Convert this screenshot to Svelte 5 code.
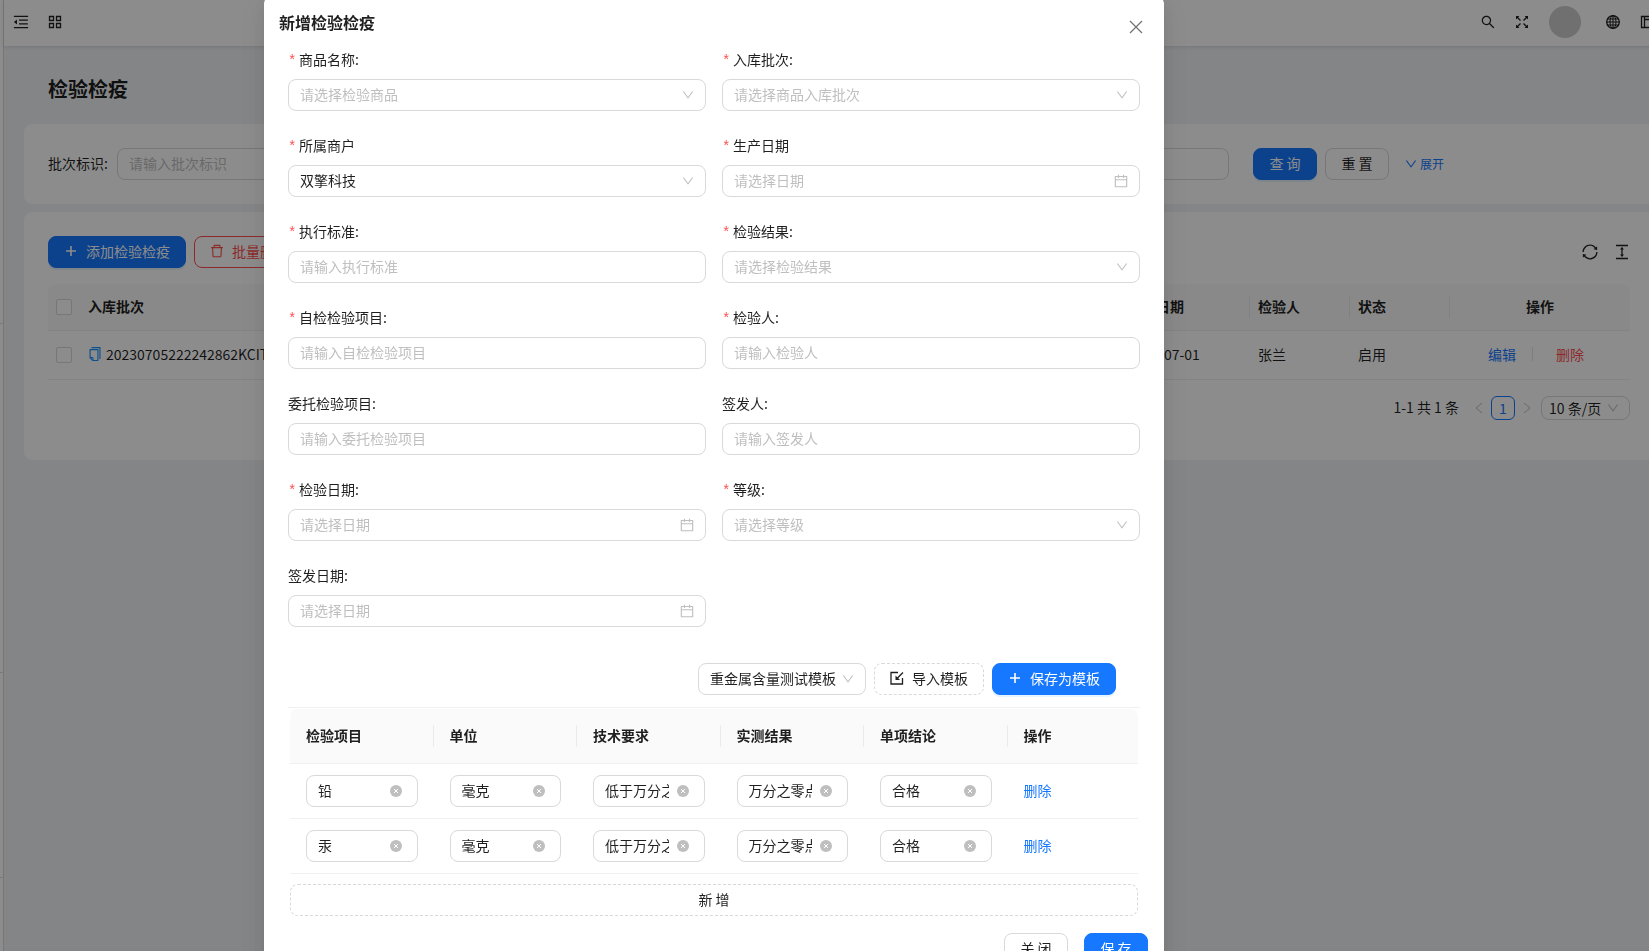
<script lang="ts">
  type Field = {
    id: string;
    label: string;
    hint: string;
    kind: "select" | "date" | "text";
    required?: boolean;
    value?: string;
  };

  const fields: Field[] = [
    { id: "goods",    label: "商品名称:",     hint: "请选择检验商品",     kind: "select", required: true },
    { id: "batch",    label: "入库批次:",     hint: "请选择商品入库批次", kind: "select", required: true },
    { id: "merchant", label: "所属商户",      hint: "", value: "双擎科技", kind: "select", required: true },
    { id: "made",     label: "生产日期",      hint: "请选择日期",         kind: "date",   required: true },
    { id: "standard", label: "执行标准:",     hint: "请输入执行标准",     kind: "text",   required: true },
    { id: "result",   label: "检验结果:",     hint: "请选择检验结果",     kind: "select", required: true },
    { id: "self",     label: "自检检验项目:", hint: "请输入自检检验项目", kind: "text",   required: true },
    { id: "checker",  label: "检验人:",       hint: "请输入检验人",       kind: "text",   required: true },
    { id: "entrust",  label: "委托检验项目:", hint: "请输入委托检验项目", kind: "text" },
    { id: "issuer",   label: "签发人:",       hint: "请输入签发人",       kind: "text" },
    { id: "checked",  label: "检验日期:",     hint: "请选择日期",         kind: "date",   required: true },
    { id: "grade",    label: "等级:",         hint: "请选择等级",         kind: "select", required: true },
    { id: "issued",   label: "签发日期:",     hint: "请选择日期",         kind: "date" },
  ];

  const columns = [
    { title: "检验项目", weight: 11 },
    { title: "单位",     weight: 11 },
    { title: "技术要求", weight: 11 },
    { title: "实测结果", weight: 11 },
    { title: "单项结论", weight: 11 },
    { title: "操作",     weight: 10 },
  ];
  const totalWeight = columns.reduce((sum, c) => sum + c.weight, 0);

  let rows = $state([
    ["铅", "毫克", "低于万分之", "万分之零点", "合格"],
    ["汞", "毫克", "低于万分之", "万分之零点", "合格"],
  ]);

  let open = $state(true);

  const addRow    = () => rows.push(["", "", "", "", ""]);
  const removeRow = (i: number) => rows.splice(i, 1);
</script>

{#snippet down()}
  <svg class="icon down" viewBox="64 64 896 896" aria-hidden="true"><path d="M884 256h-75c-5.1 0-9.9 2.5-12.9 6.6L512 654.2 227.9 262.6c-3-4.1-7.8-6.6-12.9-6.6h-75c-6.5 0-10.3 7.4-6.5 12.7l352.6 486.1c12.8 17.6 39 17.6 51.7 0l352.6-486.1c3.9-5.3.1-12.7-6.4-12.7z" /></svg>
{/snippet}

{#snippet calendar()}
  <svg class="icon calendar" viewBox="64 64 896 896" aria-hidden="true"><path d="M880 184H712v-64c0-4.4-3.6-8-8-8h-56c-4.4 0-8 3.6-8 8v64H384v-64c0-4.4-3.6-8-8-8h-56c-4.4 0-8 3.6-8 8v64H144c-17.7 0-32 14.3-32 32v664c0 17.7 14.3 32 32 32h736c17.7 0 32-14.3 32-32V216c0-17.7-14.3-32-32-32zm-40 656H184V460h656v380zM184 392V256h128v48c0 4.4 3.6 8 8 8h56c4.4 0 8-3.6 8-8v-48h256v48c0 4.4 3.6 8 8 8h56c4.4 0 8-3.6 8-8v-48h128v136H184z" /></svg>
{/snippet}

{#snippet plus()}
  <svg class="icon" viewBox="0 0 14 14" aria-hidden="true"><path class="line thick" d="M7 2v10M2 7h10" /></svg>
{/snippet}

<div class="layout">
  <aside class="sider"><i></i><i></i><i></i></aside>

  <main>
    <header>
      <button class="tool" aria-label="菜单">
        <svg class="icon large" viewBox="64 64 896 896"><path d="M408 442h480c4.4 0 8-3.6 8-8v-56c0-4.4-3.6-8-8-8H408c-4.4 0-8 3.6-8 8v56c0 4.4 3.6 8 8 8zm-8 204c0 4.4 3.6 8 8 8h480c4.4 0 8-3.6 8-8v-56c0-4.4-3.6-8-8-8H408c-4.4 0-8 3.6-8 8v56zm504-486H120c-4.4 0-8 3.6-8 8v56c0 4.4 3.6 8 8 8h784c4.4 0 8-3.6 8-8v-56c0-4.4-3.6-8-8-8zm0 632H120c-4.4 0-8 3.6-8 8v56c0 4.4 3.6 8 8 8h784c4.4 0 8-3.6 8-8v-56c0-4.4-3.6-8-8-8zM115.4 518.9L271.7 642c5.8 4.6 14.4.5 14.4-6.9V388.9c0-7.4-8.5-11.5-14.4-6.9L115.4 505.1a8.74 8.74 0 000 13.8z" /></svg>
      </button>
      <button class="tool" aria-label="应用">
        <svg class="icon" viewBox="0 0 14 14"><path class="line firm" d="M1.5 1.5h4v4h-4zM8.5 1.5h4v4h-4zM1.5 8.5h4v4h-4zM8.5 8.5h4v4h-4z" /></svg>
      </button>
      <span class="spacer"></span>
      <button class="tool" aria-label="搜索">
        <svg class="icon" viewBox="64 64 896 896"><path d="M909.6 854.5L649.9 594.8C690.2 542.7 712 479 712 412c0-80.2-31.3-155.4-87.9-212.1-56.6-56.7-132-87.9-212.1-87.9s-155.5 31.3-212.1 87.9C143.2 256.5 112 331.8 112 412c0 80.1 31.3 155.5 87.9 212.1C256.5 680.8 331.8 712 412 712c67 0 130.6-21.8 182.7-62l259.7 259.6a8.2 8.2 0 0011.6 0l43.6-43.5a8.2 8.2 0 000-11.6zM570.4 570.4C528 612.7 471.8 636 412 636s-116-23.3-158.4-65.6C211.3 528 188 471.8 188 412s23.3-116.1 65.6-158.4C296 211.3 352.2 188 412 188s116.1 23.2 158.4 65.6S636 352.2 636 412s-23.3 116.1-65.6 158.4z" /></svg>
      </button>
      <button class="tool" aria-label="全屏">
        <svg class="icon" viewBox="0 0 14 14"><path class="line firm" d="M2 2l3.500 3.500M12 2L8.500 5.500M2 12l3.500-3.500M12 12L8.500 8.500" /><path d="M1 1h3.400L1 4.400zM13 1v3.400L9.600 1zM1 13V9.600L4.400 13zM13 13H9.600L13 9.600z" /></svg>
      </button>
      <span class="avatar"></span>
      <button class="tool" aria-label="语言">
        <svg class="icon" viewBox="0 0 14 14"><circle class="line firm" cx="7" cy="7" r="6.300" /><ellipse class="line" cx="7" cy="7" rx="3" ry="6.300" /><path class="line" d="M7 .7v12.600M.7 7h12.600M1.600 4h10.800M1.600 10h10.800" /></svg>
      </button>
      <button class="tool" aria-label="布局">
        <svg class="icon" viewBox="0 0 14 14"><path class="line firm" d="M1.500 1.500h11v11h-11zM4.500 1.500v11M4.500 4.500h8" /></svg>
      </button>
    </header>

    <h1>检验检疫</h1>

    <section class="card query">
      <label for="mark">批次标识:</label>
      <input id="mark" class="box" type="text" placeholder="请输入批次标识" />
      <input class="box" type="text" aria-label="批次" />
      <div class="query-actions">
        <button class="btn primary">查 询</button>
        <button class="btn">重 置</button>
        <a class="expand" href="#expand">{@render down()}展开</a>
      </div>
    </section>

    <section class="card list">
      <div class="list-bar">
        <button class="btn primary wide" onclick={() => (open = true)}>{@render plus()}添加检验检疫</button>
        <button class="btn danger wide">
          <svg class="icon" viewBox="64 64 896 896" aria-hidden="true"><path d="M360 184h-8c4.400 0 8-3.600 8-8v8h304v-8c0 4.400 3.600 8 8 8h-8v72h72v-80c0-35.300-28.700-64-64-64H352c-35.300 0-64 28.700-64 64v80h72v-72zm504 72H160c-17.700 0-32 14.300-32 32v32c0 4.400 3.600 8 8 8h60.400l24.700 523c1.600 34.100 29.800 61 63.900 61h454c34.200 0 62.300-26.800 63.900-61l24.700-523H888c4.400 0 8-3.600 8-8v-32c0-17.700-14.300-32-32-32zM731.300 840H292.700l-24.200-512h487l-24.200 512z" /></svg>
          批量删除
        </button>
        <span class="spacer"></span>
        <button class="tool" aria-label="刷新">
          <svg class="icon large" viewBox="64 64 896 896"><path d="M168 504.200c1-43.700 10-86.100 26.900-126 17.300-41 42.100-77.700 73.700-109.400S337 212.300 378 195c42.400-17.900 87.400-27 133.900-27s91.500 9.100 133.800 27A341.500 341.500 0 01755 268.800c9.900 9.900 19.200 20.400 27.800 31.400l-60.200 47a8 8 0 003 14.100l175.700 43c5 1.200 9.900-2.600 9.900-7.700l.8-180.900c0-6.700-7.700-10.500-12.900-6.300l-56.400 44.100C765.800 155.100 646.200 92 511.800 92 282.700 92 96.300 275.600 92 503.800a8 8 0 008 8.200h60c4.400 0 7.900-3.500 8-7.800zm756 7.800h-60c-4.400 0-7.900 3.500-8 7.800-1 43.700-10 86.100-26.900 126-17.300 41-42.100 77.800-73.700 109.400A342.450 342.450 0 01512.100 856a342.240 342.240 0 01-243.200-100.800c-9.900-9.900-19.200-20.400-27.800-31.400l60.200-47a8 8 0 00-3-14.100l-175.700-43c-5-1.200-9.900 2.600-9.900 7.700l-.7 181c0 6.700 7.700 10.500 12.900 6.300l56.400-44.100C258.200 868.900 377.800 932 512.200 932c229.200 0 415.500-183.700 419.800-411.800a8 8 0 00-8-8.200z" /></svg>
        </button>
        <button class="tool" aria-label="密度">
          <svg class="icon large" viewBox="64 64 896 896"><path d="M840 836H184c-4.400 0-8 3.600-8 8v60c0 4.400 3.600 8 8 8h656c4.400 0 8-3.600 8-8v-60c0-4.400-3.600-8-8-8zm0-724H184c-4.400 0-8 3.600-8 8v60c0 4.400 3.600 8 8 8h656c4.400 0 8-3.600 8-8v-60c0-4.400-3.600-8-8-8zM610.800 378c6 0 9.400-7 5.700-11.700L515.700 238.700a7.140 7.140 0 00-11.300 0L403.600 366.300a7.230 7.230 0 005.700 11.700H476v268h-62.800c-6 0-9.400 7-5.700 11.700l100.800 127.500c2.900 3.700 8.500 3.700 11.300 0l100.800-127.500c3.700-4.700.4-11.700-5.700-11.700H548V378h62.800z" /></svg>
        </button>
      </div>

      <table class="records">
        <thead>
          <tr>
            <th class="c-check"><input type="checkbox" aria-label="全选" /></th>
            <th>入库批次</th>
            <th class="c-date">检验日期</th>
            <th class="c-name">检验人</th>
            <th class="c-name">状态</th>
            <th class="c-ops">操作</th>
          </tr>
        </thead>
        <tbody>
          <tr>
            <td class="c-check"><input type="checkbox" aria-label="选择" /></td>
            <td>
              <span class="code">
                <svg class="icon copy" viewBox="64 64 896 896" aria-hidden="true"><path d="M832 64H296c-4.400 0-8 3.600-8 8v56c0 4.400 3.600 8 8 8h496v688c0 4.400 3.600 8 8 8h56c4.400 0 8-3.600 8-8V96c0-17.700-14.300-32-32-32zM704 192H192c-17.700 0-32 14.300-32 32v530.700c0 8.500 3.400 16.600 9.400 22.600l173.300 173.300c2.200 2.200 4.700 4 7.400 5.500v1.900h4.200c3.500 1.300 7.200 2 11 2H704c17.700 0 32-14.300 32-32V224c0-17.700-14.300-32-32-32zM350 856.200L263.900 770H350v86.200zM664 888H414V746c0-22.100-17.900-40-40-40H232V264h432v624z" /></svg>
                20230705222242862KCIT1
              </span>
            </td>
            <td>2023-07-01</td>
            <td>张兰</td>
            <td>启用</td>
            <td class="c-ops">
              <span class="ops"><a href="#edit">编辑</a><i></i><a class="red" href="#delete">删除</a></span>
            </td>
          </tr>
        </tbody>
      </table>

      <nav class="pages">
        <span class="total">1-1 共 1 条</span>
        <button class="turn" aria-label="上一页"><svg class="icon" viewBox="0 0 14 14"><path class="line" d="M10 2L4 7l6 5" /></svg></button>
        <button class="page">1</button>
        <button class="turn" aria-label="下一页"><svg class="icon" viewBox="0 0 14 14"><path class="line" d="M4 2l6 5-6 5" /></svg></button>
        <span class="control small">
          <select aria-label="每页条数"><option>10 条/页</option></select>
          {@render down()}
        </span>
      </nav>
    </section>
  </main>
</div>

{#if open}
  <div class="mask">
    <div class="modal" role="dialog" aria-labelledby="modal-title">
      <div class="modal-head">
        <h2 id="modal-title">新增检验检疫</h2>
        <button class="close" aria-label="关闭" onclick={() => (open = false)}>
          <svg class="icon" viewBox="0 0 14 14"><path class="line firm" d="M1 1l12 12M13 1L1 13" /></svg>
        </button>
      </div>

      <form onsubmit={(e) => e.preventDefault()}>
        <div class="fields">
          {#each fields as f (f.id)}
            <div class="field">
              <label for={f.id}>{#if f.required}<span class="star">*</span>{/if}{f.label}</label>
              <div class="control">
                {#if f.kind === "select"}
                  <select id={f.id} class:empty={!f.value}><option>{f.value ?? f.hint}</option></select>
                  {@render down()}
                {:else}
                  <input id={f.id} type="text" placeholder={f.hint} />
                  {#if f.kind === "date"}{@render calendar()}{/if}
                {/if}
              </div>
            </div>
          {/each}
        </div>

        <div class="template-bar">
          <div class="control template">
            <select aria-label="模板"><option>重金属含量测试模板</option></select>
            {@render down()}
          </div>
          <button class="btn dashed wide" type="button">
            <svg class="icon" viewBox="0 0 14 14" aria-hidden="true"><path class="line firm" d="M8 1.500H1v11.500h11.500V7M13 1.500L7.500 7" /><path d="M5.500 4.500v4.500H10z" /></svg>
            导入模板
          </button>
          <button class="btn primary wide" type="button">{@render plus()}保存为模板</button>
        </div>

        <div class="items-wrap">
          <table class="items">
            <colgroup>
              {#each columns as c}
                <col style="width: {(c.weight / totalWeight) * 100}%" />
              {/each}
            </colgroup>
            <thead>
              <tr>
                {#each columns as c}<th>{c.title}</th>{/each}
              </tr>
            </thead>
            <tbody>
              {#each rows as row, i}
                <tr>
                  {#each row as _, j}
                    <td>
                      <div class="control">
                        <input type="text" aria-label={columns[j].title} bind:value={row[j]} />
                        <button class="clear" type="button" aria-label="清空" onclick={() => (row[j] = "")}>
                          <svg viewBox="0 0 12 12"><circle cx="6" cy="6" r="6" /><path d="M4 4l4 4M8 4L4 8" /></svg>
                        </button>
                      </div>
                    </td>
                  {/each}
                  <td><button class="link" type="button" onclick={() => removeRow(i)}>删除</button></td>
                </tr>
              {/each}
            </tbody>
          </table>
          <button class="btn dashed add" type="button" onclick={addRow}>新 增</button>
        </div>

        <div class="modal-foot">
          <button class="btn" type="button" onclick={() => (open = false)}>关 闭</button>
          <button class="btn primary" type="submit">保 存</button>
        </div>
      </form>
    </div>
  </div>
{/if}

<style>
    :global(body) {
        background: #f0f2f5;
        color: rgba(0, 0, 0, 0.88);
        font: 14px/22px "Noto Sans CJK SC", sans-serif;
        overflow: hidden;
    }

    * {
        box-sizing: border-box;
    }

    button, input, select {
        margin: 0;
        padding: 0;
        border: 0;
        outline: 0;
        background: none;
        color: inherit;
        font: inherit;
    }

    button {
        cursor: pointer;
    }

    a {
        color: #1677ff;
        text-decoration: none;
    }

    .icon {
        width: 14px;
        height: 14px;
        flex: none;
        display: block;
        fill: currentColor;
    }

    .icon.large {
        width: 16px;
        height: 16px;
    }

    .line {
        fill: none;
        stroke: currentColor;
        stroke-width: 1;
    }

    .line.firm {
        stroke-width: 1.3;
    }

    .line.thick {
        stroke-width: 1.6;
    }

    .spacer {
        flex: 1;
    }

    /* page */
    .layout {
        display: flex;
        min-height: 100vh;
    }

    .sider {
        width: 4px;
        flex: none;
        background: #fff;
        border-right: 1px solid #d9d9d9;
    }

    .sider i {
        display: block;
        height: 205px;
        border-bottom: 1px solid #dcdcdc;
    }

    .sider i:first-child {
        height: 324px;
    }

    .sider i:nth-child(2) {
        height: 349px;
    }

    main {
        flex: 1;
        min-width: 0;
        margin-right: -29px;
    }

    header {
        display: flex;
        align-items: center;
        height: 46px;
        padding: 0 14px 2px 9px;
        background: #fff;
        box-shadow: 0 1px 4px rgba(0, 21, 41, 0.12);
    }

    .tool {
        display: flex;
        justify-content: center;
        width: 34px;
    }

    header .tool:first-child {
        width: 16px;
        margin-right: 9px;
    }

    .avatar {
        width: 32px;
        height: 32px;
        margin: 0 15px 0 10px;
        border-radius: 50%;
        background: #ccc;
    }

    h1 {
        margin: 28px 44px 20px;
        font-size: 20px;
        line-height: 30px;
        font-weight: 600;
    }

    .card {
        margin: 0 24px 8px 20px;
        padding: 24px;
        border-radius: 8px;
        background: #fff;
    }

    .box {
        height: 32px;
        padding: 0 11px 2px;
        border: 1px solid #d9d9d9;
        border-radius: 8px;
    }

    input::placeholder {
        color: #bfbfbf;
        opacity: 1;
    }

    .query {
        display: flex;
        align-items: center;
    }

    .query label {
        margin-right: 9px;
        padding-bottom: 2px;
    }

    .query .box {
        flex: 1;
        min-width: 0;
        margin-right: 24px;
    }

    .query-actions {
        display: flex;
        align-items: center;
        gap: 8px;
        width: 377px;
    }

    .expand {
        display: flex;
        align-items: center;
        gap: 3px;
        margin-left: 8px;
        font-size: 12px;
    }

    .btn {
        display: flex;
        align-items: center;
        justify-content: center;
        gap: 8px;
        min-width: 64px;
        height: 32px;
        padding-bottom: 2px;
        border: 1px solid #d9d9d9;
        border-radius: 8px;
        background: #fff;
        white-space: nowrap;
    }

    .btn.wide {
        padding: 0 15px 2px;
    }

    .btn.primary {
        border-color: #1677ff;
        background: #1677ff;
        color: #fff;
        box-shadow: 0 2px 0 rgba(5, 145, 255, 0.1);
    }

    .btn.danger {
        border-color: #ff4d4f;
        color: #ff4d4f;
    }

    .btn.dashed {
        border-style: dashed;
    }

    .list-bar {
        display: flex;
        align-items: center;
        gap: 8px;
        margin-bottom: 16px;
    }

    .list-bar .tool {
        width: 16px;
        margin-left: 8px;
    }

    table {
        width: 100%;
        border-collapse: separate;
        border-spacing: 0;
        table-layout: fixed;
    }

    th, td {
        border-bottom: 1px solid #f0f0f0;
        text-align: left;
        white-space: nowrap;
    }

    th {
        background: #fafafa;
        font-weight: 600;
        position: relative;
    }

    th:first-child {
        border-top-left-radius: 8px;
    }

    th:last-child {
        border-top-right-radius: 8px;
    }

    th:not(:last-child):not(.c-check)::after {
        content: "";
        position: absolute;
        top: 50%;
        right: 0;
        width: 1px;
        height: 22px;
        margin-top: -11px;
        background: #ebebeb;
    }

    .records th {
        height: 47px;
        padding: 0 8px 2px;
    }

    .records td {
        height: 49px;
        padding: 0 8px 2px;
    }

    .records .c-check {
        width: 32px;
        padding-bottom: 0;
    }

    .c-date {
        width: 130px;
    }

    .c-name {
        width: 100px;
    }

    .records .c-ops {
        width: 180px;
        text-align: center;
    }

    input[type="checkbox"] {
        appearance: none;
        display: block;
        width: 16px;
        height: 16px;
        border: 1px solid #d9d9d9;
        border-radius: 2px;
        background: #fff;
    }

    .code {
        display: flex;
        align-items: center;
        gap: 4px;
    }

    .copy {
        color: #1890ff;
    }

    .ops {
        display: flex;
        align-items: center;
        justify-content: center;
        padding-right: 8px;
    }

    .ops i {
        width: 1px;
        height: 14px;
        margin: 0 23px 0 16px;
        background: #e4e4e4;
    }

    .ops .red {
        color: #ff4d4f;
    }

    .pages {
        display: flex;
        align-items: center;
        justify-content: flex-end;
        margin: 16px 0;
    }

    .total {
        margin-right: 8px;
        padding-bottom: 2px;
    }

    .turn {
        display: flex;
        align-items: center;
        justify-content: center;
        width: 24px;
        height: 24px;
        color: #bfbfbf;
    }

    .page {
        width: 24px;
        height: 24px;
        border: 1px solid #1677ff;
        border-radius: 6px;
        color: #1677ff;
        line-height: 20px;
    }

    /* inputs and selects share one bordered shell */
    .control {
        display: flex;
        align-items: center;
        height: 32px;
        padding: 0 11px;
        border: 1px solid #d9d9d9;
        border-radius: 8px;
        background: #fff;
    }

    .control input,
    .control select {
        flex: 1;
        width: 100%;
        min-width: 0;
        height: 30px;
        padding-bottom: 2px;
        appearance: none;
    }

    .control .icon {
        color: #bfbfbf;
    }

    .control.small {
        width: 89px;
        height: 24px;
        margin-left: 2px;
        padding: 0 10px 0 7px;
    }

    .control.small select {
        height: 22px;
    }

    .down {
        width: 12px;
        height: 12px;
    }

    select.empty {
        color: #bfbfbf;
    }

    /* dialog */
    .mask {
        position: fixed;
        inset: 0;
        overflow: hidden;
        background: rgba(0, 0, 0, 0.45);
    }

    .modal {
        max-width: 900px;
        margin: -4px 0 0 264px;
        padding-bottom: 20px;
        border-radius: 8px;
        background: #fff;
        box-shadow: 0 6px 16px rgba(0, 0, 0, 0.08), 0 3px 6px -4px rgba(0, 0, 0, 0.12), 0 9px 28px 8px rgba(0, 0, 0, 0.05);
    }

    .modal-head {
        display: flex;
        justify-content: space-between;
        align-items: flex-end;
        padding: 14px 21px 14px 15px;
    }

    h2 {
        margin: 0;
        font-size: 16px;
        line-height: 24px;
        font-weight: 600;
    }

    .close {
        color: rgba(0, 0, 0, 0.55);
    }

    .fields {
        display: grid;
        grid-template-columns: 1fr 1fr;
        gap: 24px 16px;
        padding: 0 24px;
    }

    .field label {
        display: block;
        height: 22px;
        margin-bottom: 9px;
    }

    .field .control {
        margin-bottom: -1px;
    }

    .star {
        display: inline-block;
        width: 11px;
        color: #ff4d4f;
        font-family: "Liberation Mono", monospace;
        line-height: 16px;
    }

    .template-bar {
        display: flex;
        justify-content: flex-end;
        gap: 8px;
        padding: 37px 48px 12px;
    }

    .template {
        width: 168px;
    }

    .items-wrap {
        margin: 0 24px;
        padding: 1px 2px 0;
        border-top: 1px solid #f0f0f0;
    }

    .items th {
        height: 55px;
        padding: 0 16px 2px;
    }

    .items td {
        height: 55px;
        padding: 0 16px;
    }

    .clear {
        flex: none;
        width: 12px;
        height: 12px;
        margin: 0 4px 0 8px;
    }

    .clear svg {
        display: block;
        fill: #bfbfbf;
        stroke: #fff;
        stroke-width: 1;
    }

    .clear circle {
        stroke: none;
    }

    .link {
        padding-bottom: 2px;
        color: #1677ff;
    }

    .add {
        width: 100%;
        margin-top: 10px;
    }

    .modal-foot {
        display: flex;
        justify-content: flex-end;
        gap: 16px;
        padding: 17px 16px 0;
    }
</style>
